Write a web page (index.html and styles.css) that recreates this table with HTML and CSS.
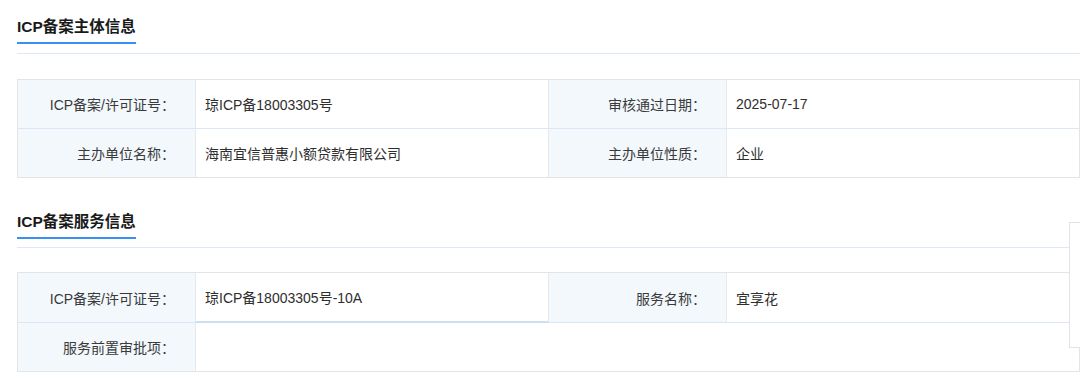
FILE: index.html
```html
<!DOCTYPE html>
<html lang="zh-CN">
<head>
<meta charset="utf-8">
<title>ICP备案信息</title>
<link rel="stylesheet" href="styles.css">
</head>
<body>
<div class="page">
  <section class="section">
    <div class="sec-head"><h2 class="sec-title">ICP备案主体信息</h2></div>
    <div class="info-grid">
      <div class="cell label">ICP备案/许可证号：</div>
      <div class="cell value">琼ICP备18003305号</div>
      <div class="cell label">审核通过日期：</div>
      <div class="cell value last">2025-07-17</div>
      <div class="cell label r2">主办单位名称：</div>
      <div class="cell value r2">海南宜信普惠小额贷款有限公司</div>
      <div class="cell label r2">主办单位性质：</div>
      <div class="cell value last r2">企业</div>
    </div>
  </section>
  <section class="section second">
    <div class="sec-head"><h2 class="sec-title">ICP备案服务信息</h2></div>
    <div class="info-grid">
      <div class="cell label">ICP备案/许可证号：</div>
      <div class="cell value focus">琼ICP备18003305号-10A</div>
      <div class="cell label">服务名称：</div>
      <div class="cell value last">宜享花</div>
      <div class="cell label r2">服务前置审批项：</div>
      <div class="cell value wide r2"></div>
    </div>
  </section>
  <div class="side-panel"></div>
</div>
</body>
</html>
```
FILE: styles.css
```css
* { box-sizing: border-box; }
html, body { margin: 0; padding: 0; background: #fff; }
body {
  font-family: "Liberation Sans", "Noto Sans CJK SC", sans-serif;
  color: #333;
  width: 1080px;
  height: 386px;
  overflow: hidden;
}
.page {
  position: relative;
  padding: 17px 0 0 17px;
  width: 1080px;
  height: 386px;
}
.section { width: 1063px; }
.section.second { margin-top: 34px; }
.sec-head {
  border-bottom: 1px solid #dde9f6;
  padding-bottom: 9px;
  margin-bottom: 25px;
}
.section.second .sec-head { padding-bottom: 8px; margin-bottom: 24px; }
.sec-title {
  display: inline-block;
  margin: 0;
  font-size: 15.5px;
  line-height: 20px;
  font-weight: bold;
  color: #1a1a1a;
  padding-bottom: 5px;
  border-bottom: 2px solid #3a8ff3;
}
.info-grid {
  display: grid;
  grid-template-columns: 178px 353px 178px 352px;
  border: 1px solid #e4e4e4;
}
.cell {
  height: 49px;
  display: flex;
  align-items: center;
  font-size: 14px;
  border-right: 1px solid #e6e8ea;
  border-bottom: 1px solid #dbe7f4;
}
.section.second .cell { height: 50px; }
.cell.r2, .section.second .cell.r2 { height: 48px; border-bottom: none; }
.cell.last { border-right: none; }
.label {
  background: #f3f8fd;
  justify-content: flex-end;
  padding-right: 20px;
  color: #3a3a3a;
}
.value {
  padding-left: 9px;
  color: #2e2e2e;
}
.value.focus { border-bottom: 2px solid #cbdff1; }
.value.wide { grid-column: span 3; border-right: none; }
.side-panel {
  position: absolute;
  left: 1069px;
  top: 222px;
  width: 20px;
  height: 126px;
  background: #fff;
  border: 1px solid #e3e3e3;
}
```
